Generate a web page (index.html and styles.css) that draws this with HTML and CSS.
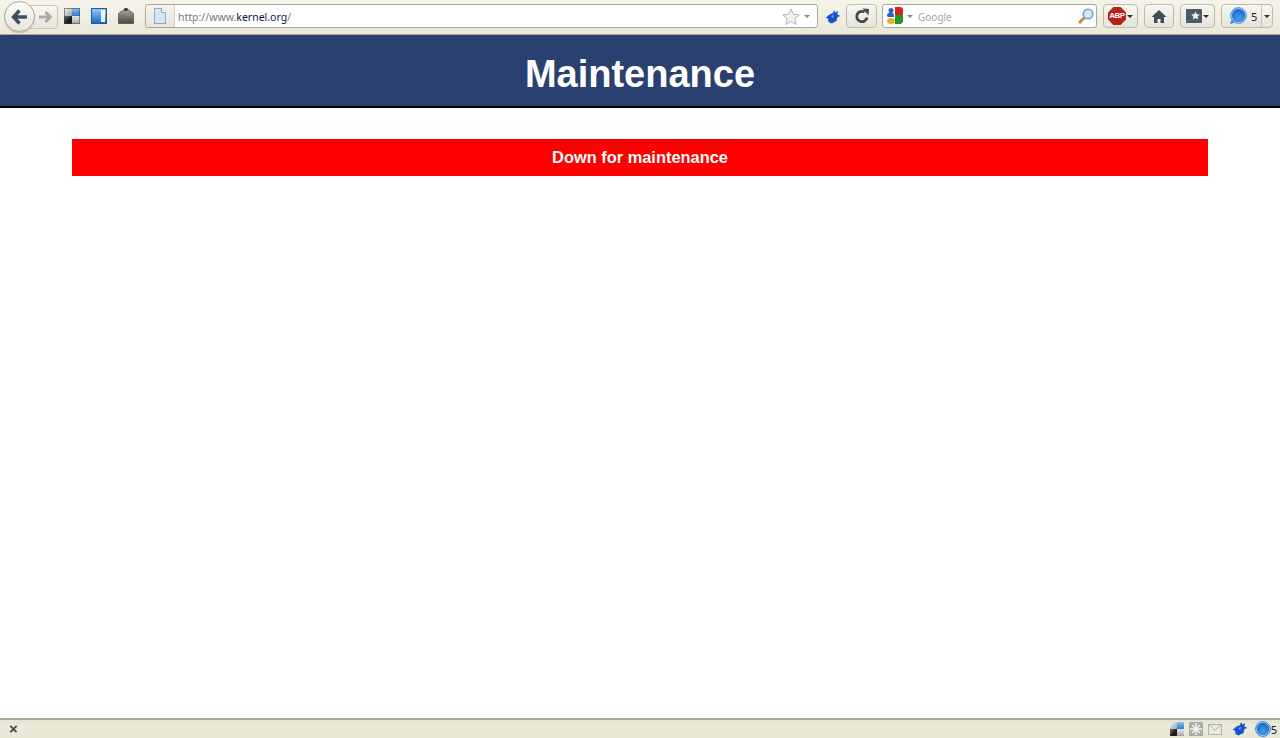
FILE: index.html
```html
<!DOCTYPE html>
<html lang="en">
<head>
  <meta charset="UTF-8" />
  <meta name="viewport" content="width=device-width, initial-scale=1.0"/>
  <title>Maintenance</title>
  <link rel="stylesheet" href="styles.css">
</head>
<body>

  <div class="toolbar">
    <div class="nav-group">
      <div class="back-btn">
        <svg width="20" height="20" viewBox="0 0 20 20"><path d="M9.500 3.500 3.500 10l6 6.500M4 10h13" fill="none" stroke="#3f4f60" stroke-width="3.400"/></svg>
      </div>
      <div class="forward-btn">
        <svg width="14" height="14" viewBox="0 0 14 14"><path d="M7.500 2 12.500 7l-5 5M12 7H1" fill="none" stroke="#a9aca6" stroke-width="3"/></svg>
      </div>
    </div>

    <div class="bookmarks">
      <svg width="16" height="16" viewBox="0 0 16 16">
        <defs>
          <linearGradient id="tlGrad" x1="0" y1="0" x2="1" y2="1"><stop offset="0" stop-color="#f4f6f8"/><stop offset="1" stop-color="#9aa4ae"/></linearGradient>
          <linearGradient id="trGrad" x1="0" y1="0" x2="0" y2="1"><stop offset="0" stop-color="#8cc4f0"/><stop offset="1" stop-color="#2a7ad0"/></linearGradient>
          <linearGradient id="blGrad" x1="0" y1="0" x2="1" y2="1"><stop offset="0" stop-color="#777"/><stop offset=".6" stop-color="#15181a"/><stop offset="1" stop-color="#222"/></linearGradient>
          <linearGradient id="brGrad" x1="0" y1="0" x2="0" y2="1"><stop offset="0" stop-color="#e8e8e8"/><stop offset="1" stop-color="#a4a4a4"/></linearGradient>
          <linearGradient id="blueGrad" x1="0" y1="0" x2="0" y2="1"><stop offset="0" stop-color="#8cc8f4"/><stop offset="1" stop-color="#1f6cc8"/></linearGradient>
          <linearGradient id="grayGrad" x1="0" y1="0" x2="0" y2="1"><stop offset="0" stop-color="#a8a8a4"/><stop offset="1" stop-color="#44443f"/></linearGradient>
          <radialGradient id="chatGrad" cx=".5" cy=".7" r=".7"><stop offset="0" stop-color="#4a9ce8"/><stop offset="1" stop-color="#1b62c4"/></radialGradient>
        </defs>
        <rect width="8" height="8" fill="url(#tlGrad)"/><rect x="8" width="8" height="8" fill="url(#trGrad)"/>
        <rect y="8" width="8" height="8" fill="url(#blGrad)"/><rect x="8" y="8" width="8" height="8" fill="url(#brGrad)"/>
        <rect x=".5" y=".5" width="15" height="15" fill="none" stroke="#3a3e42" stroke-opacity=".55"/>
      </svg>
      <svg width="16" height="16" viewBox="0 0 16 16">
        <rect width="16" height="16" fill="#1a5aa4"/><rect x="1" y="1" width="14" height="14" fill="url(#blueGrad)"/>
        <rect x="10" y="2" width="4" height="12" fill="#eef5fb"/>
      </svg>
      <svg width="16" height="16" viewBox="0 0 16 16">
        <path d="M.5 5.500 6 1.500h4l5.500 4v10H.5z" fill="url(#grayGrad)" stroke="#55554f" stroke-width=".8"/>
        <rect x="6.500" y="0" width="3" height="3" fill="#3a3a36"/>
      </svg>
    </div>

    <div class="url-bar">
      <div class="site-icon">
        <svg width="14" height="16" viewBox="0 0 14 16"><path d="M1.500.5h7l4 4v11h-11z" fill="#d4e6fa" stroke="#8fa9c4"/><path d="M8.500.5v4h4" fill="#fff" stroke="#8fa9c4"/></svg>
      </div>
      <div class="url-text">http://www.<span class="url-host">kernel.org</span>/</div>
      <svg class="star" width="18" height="17" viewBox="0 0 18 17"><path d="M9 1l2.400 5.300 5.800.6-4.300 3.900 1.200 5.700L9 13.600l-5.100 2.900 1.200-5.700L.8 6.900l5.800-.6z" fill="#f0f0ee" stroke="#b4b6b4"/></svg>
      <span class="caret"></span>
    </div>

    <svg class="bird" width="16" height="14" viewBox="0 0 16 14"><path d="M.5 8l4-3.500L8 3l1-3 1.500 2.500L13 1l-.5 3.500L15.500 6l-3 1-1 4-5 2.500-3-1.500-.5-3.500z" fill="#1c50d0"/><path d="M6 6l3-1-1 3z" fill="#7ea4ee"/></svg>

    <div class="btn reload-btn">
      <svg width="16" height="16" viewBox="0 0 16 16"><path d="M13 9.500A5.200 5.200 0 1 1 10.500 4" fill="none" stroke="#3e4a50" stroke-width="2.800"/><path d="M8.500.5l6.500.5-.5 6.500z" fill="#3e4a50"/></svg>
    </div>

    <div class="search-bar">
      <svg class="g-logo" width="18" height="18" viewBox="0 0 18 18">
        <circle cx="5" cy="3.500" r="2.500" fill="#2a5fd0"/><path d="M1 9c0-3 2-3.500 4-3.500s3 1 3 3.500v1H2z" fill="#2a5fd0"/>
        <path d="M9 0h6l2 2v6H9z" fill="#d6231c"/>
        <path d="M9 8h8v7l-2 2H9z" fill="#1d9a2e"/><ellipse cx="5" cy="14" rx="4" ry="3" fill="#efb21a"/>
      </svg>
      <span class="caret"></span>
      <div class="search-text">Google</div>
      <svg class="magnifier" width="18" height="18" viewBox="0 0 18 18"><path d="M7.500 10.500 2 16" stroke="#d0863c" stroke-width="3"/><circle cx="11" cy="7" r="4.800" fill="#cfe8fa" stroke="#6fa6d4" stroke-width="1.600"/></svg>
    </div>

    <div class="btn abp-btn">
      <div class="abp-badge">ABP</div>
      <span class="caret dark"></span>
    </div>

    <div class="btn home-btn">
      <svg width="16" height="15" viewBox="0 0 16 15"><path d="M8 1 .5 8h2.500v6h3.500v-4h3v4H13V8h2.500z" fill="#3e4e5a"/></svg>
    </div>

    <div class="btn star-btn">
      <svg width="16" height="14" viewBox="0 0 16 14"><rect width="16" height="14" rx="1" fill="#4a5a68"/><path d="M9.500 2.500l1.300 2.800 3 .3-2.300 2 .7 3-2.700-1.600-2.700 1.600.7-3-2.300-2 3-.3z" fill="#f2f4f4"/></svg>
      <span class="caret dark"></span>
    </div>

    <div class="btn chat-btn">
      <div class="chat-main">
        <svg width="18" height="18" viewBox="0 0 18 18"><path d="M2.500 13l-1.500 4 4.500-1.500z" fill="#2f7fe0"/><circle cx="9.500" cy="8.500" r="7.800" fill="#bcdcf8" stroke="#2f7fe0" stroke-width="1"/><circle cx="9.500" cy="8.500" r="6.600" fill="url(#chatGrad)"/></svg>
        <span class="chat-count">5</span>
      </div>
      <div class="chat-arrow"><span class="caret dark"></span></div>
    </div>
  </div>

  <div class="page">
    <div class="page-header">
      <h1>Maintenance</h1>
    </div>
    <div class="page-body">
      <div class="notice">Down for maintenance</div>
    </div>
  </div>

  <div class="statusbar">
    <div class="status-close">×</div>
    <div class="status-icons">
      <svg width="14" height="14" viewBox="0 0 16 16">
        <rect width="8" height="8" fill="url(#tlGrad)"/><rect x="8" width="8" height="8" fill="url(#trGrad)"/>
        <rect y="8" width="8" height="8" fill="url(#blGrad)"/><rect x="8" y="8" width="8" height="8" fill="url(#brGrad)"/>
      </svg>
      <svg width="14" height="14" viewBox="0 0 14 14"><rect width="14" height="14" fill="#a9aba6"/><path d="M7 1v12M1 7h12M3 3l8 8M11 3l-8 8" stroke="#f2f2ee" stroke-width="1.600"/></svg>
      <svg width="14" height="11" viewBox="0 0 14 11"><rect x=".5" y=".5" width="13" height="10" fill="#ecebe0" stroke="#b0b1aa"/><path d="M.5.500 7 6l6.500-5.500" fill="none" stroke="#b0b1aa"/></svg>
      <svg class="status-bird" width="16" height="14" viewBox="0 0 16 14"><path d="M.5 8l4-3.500L8 3l1-3 1.500 2.500L13 1l-.5 3.500L15.500 6l-3 1-1 4-5 2.500-3-1.500-.5-3.500z" fill="#1c50d0"/><path d="M6 6l3-1-1 3z" fill="#7ea4ee"/></svg>
      <div class="status-chat">
        <svg width="16" height="16" viewBox="0 0 16 16"><circle cx="8" cy="8" r="7.400" fill="#bcdcf8" stroke="#2f7fe0" stroke-width="1"/><circle cx="8" cy="8" r="6.200" fill="url(#chatGrad)"/></svg>
        <span class="status-count">5</span>
      </div>
    </div>
  </div>

</body>
</html>
```

FILE: styles.css
```css
html, body {
  height: 100%;
}
body {
  margin: 0;
  display: flex;
  flex-direction: column;
  height: 100vh;
  overflow: hidden;
  background: #fff;
  font-family: "Liberation Sans", Arial, sans-serif;
}

/* browser chrome */
.toolbar {
  height: 34px;
  flex: none;
  display: flex;
  align-items: flex-start;
  padding-left: 4px;
  background: linear-gradient(to bottom, #f6f4ea, #ebe8d8);
  border-bottom: 1px solid #a8a694;
}
.nav-group {
  display: flex;
  align-items: center;
  margin-top: 1px;
  height: 31px;
}
.back-btn {
  width: 29px;
  height: 29px;
  border-radius: 50%;
  border: 1px solid #a9a89a;
  background: linear-gradient(to bottom, #fcfcf8, #e8e6da);
  box-shadow: 0 1px 1px rgba(0,0,0,0.2);
  display: flex;
  align-items: center;
  justify-content: center;
  position: relative;
  z-index: 1;
}
.forward-btn {
  width: 25px;
  height: 22px;
  margin-left: -5px;
  padding-left: 2px;
  border: 1px solid #c8c6b6;
  border-left: none;
  border-radius: 0 4px 4px 0;
  background: linear-gradient(to bottom, #f8f7f0, #e8e6da);
  display: flex;
  align-items: center;
  justify-content: center;
}
.bookmarks {
  display: flex;
  gap: 11px;
  margin-left: 6px;
  margin-top: 8px;
}
.url-bar {
  width: 671px;
  height: 22px;
  margin-left: 11px;
  margin-top: 4px;
  display: flex;
  align-items: center;
  background: #fff;
  border: 1px solid #a9a89a;
  border-radius: 3px;
  font-family: "Noto Sans", sans-serif;
  font-size: 10.5px;
}
.site-icon {
  width: 28px;
  height: 22px;
  flex: none;
  display: flex;
  align-items: center;
  justify-content: center;
  background: linear-gradient(to bottom, #f4f2ea, #e8e6dc);
  border-right: 1px solid #d4d2c6;
  border-radius: 3px 0 0 3px;
}
.url-text {
  flex: 1;
  padding: 1px 0 0 3px;
  color: #77797c;
}
.url-host {
  color: #14143c;
}
.star {
  margin-right: 4px;
}
.caret {
  width: 0;
  height: 0;
  flex: none;
  border-left: 3px solid transparent;
  border-right: 3px solid transparent;
  border-top: 3px solid #8a8a84;
}
.caret.dark {
  border-top-color: #2c2c2c;
}
.url-bar .caret {
  margin-right: 7px;
}
.bird {
  margin-left: 7px;
  margin-top: 10px;
  flex: none;
}
.btn {
  height: 22px;
  margin-top: 4px;
  margin-left: 6px;
  display: flex;
  align-items: center;
  justify-content: center;
  flex: none;
  border: 1px solid #bdbbaa;
  border-radius: 4px;
  background: linear-gradient(to bottom, #f8f7f0, #e6e4d8);
}
.reload-btn {
  width: 29px;
  margin-left: 5px;
}
.search-bar {
  width: 213px;
  height: 22px;
  margin-left: 5px;
  margin-top: 4px;
  flex: none;
  display: flex;
  align-items: center;
  background: #fff;
  border: 1px solid #a9a89a;
  border-radius: 3px;
  font-family: "Noto Sans", sans-serif;
  font-size: 10px;
}
.g-logo {
  margin-left: 3px;
  margin-right: 3px;
  flex: none;
}
.search-text {
  flex: 1;
  margin-left: 5px;
  padding-top: 1px;
  color: #a4a4a8;
}
.magnifier {
  margin-right: 1px;
}
.abp-btn {
  width: 33px;
  gap: 1px;
}
.abp-badge {
  width: 18px;
  height: 18px;
  clip-path: polygon(30% 0, 70% 0, 100% 30%, 100% 70%, 70% 100%, 30% 100%, 0 70%, 0 30%);
  background: #b8201a;
  color: #fff;
  font-size: 8px;
  font-weight: bold;
  letter-spacing: -0.5px;
  line-height: 18px;
  text-align: center;
}
.home-btn {
  width: 28px;
}
.star-btn {
  width: 33px;
  gap: 1px;
}
.chat-btn {
  width: 50px;
  justify-content: flex-start;
}
.chat-main {
  width: 40px;
  height: 22px;
  display: flex;
  align-items: center;
  padding-left: 7px;
  box-sizing: border-box;
  gap: 4px;
  border-right: 1px solid #c8c6b6;
}
.chat-count {
  font-family: "Noto Sans", sans-serif;
  font-size: 11px;
  color: #1a1430;
}
.chat-arrow {
  flex: 1;
  display: flex;
  justify-content: center;
}

/* page */
.page {
  flex: 1;
  min-height: 0;
}
.page-header {
  height: 71px;
  background: #2a4070;
  border-bottom: 2px solid #000;
  display: flex;
  align-items: center;
  justify-content: center;
}
.page-header h1 {
  margin: 0;
  color: #fff;
  font-size: 38px;
  font-weight: bold;
  position: relative;
  top: 4px;
}
.page-body {
  padding: 31px 72px 0;
}
.notice {
  height: 37px;
  line-height: 37px;
  background: #f00;
  color: #fff;
  font-size: 16.400px;
  font-weight: bold;
  text-align: center;
}

/* status bar */
.statusbar {
  height: 18px;
  flex: none;
  display: flex;
  align-items: center;
  justify-content: space-between;
  background: linear-gradient(to bottom, #e4e2d0, #ecead8 30%, #e8e6d4);
  border-top: 2px solid #a8a898;
}
.status-close {
  margin-left: 9px;
  font-size: 15px;
  font-weight: bold;
  line-height: 18px;
  color: #444;
}
.status-icons {
  display: flex;
  align-items: center;
  gap: 5px;
}
.status-bird {
  margin-left: 5px;
}
.status-chat {
  display: flex;
  align-items: center;
  margin-left: 2px;
}
.status-count {
  font-family: "Noto Sans", sans-serif;
  font-size: 11px;
  color: #14143c;
  margin-right: 3px;
}
```
